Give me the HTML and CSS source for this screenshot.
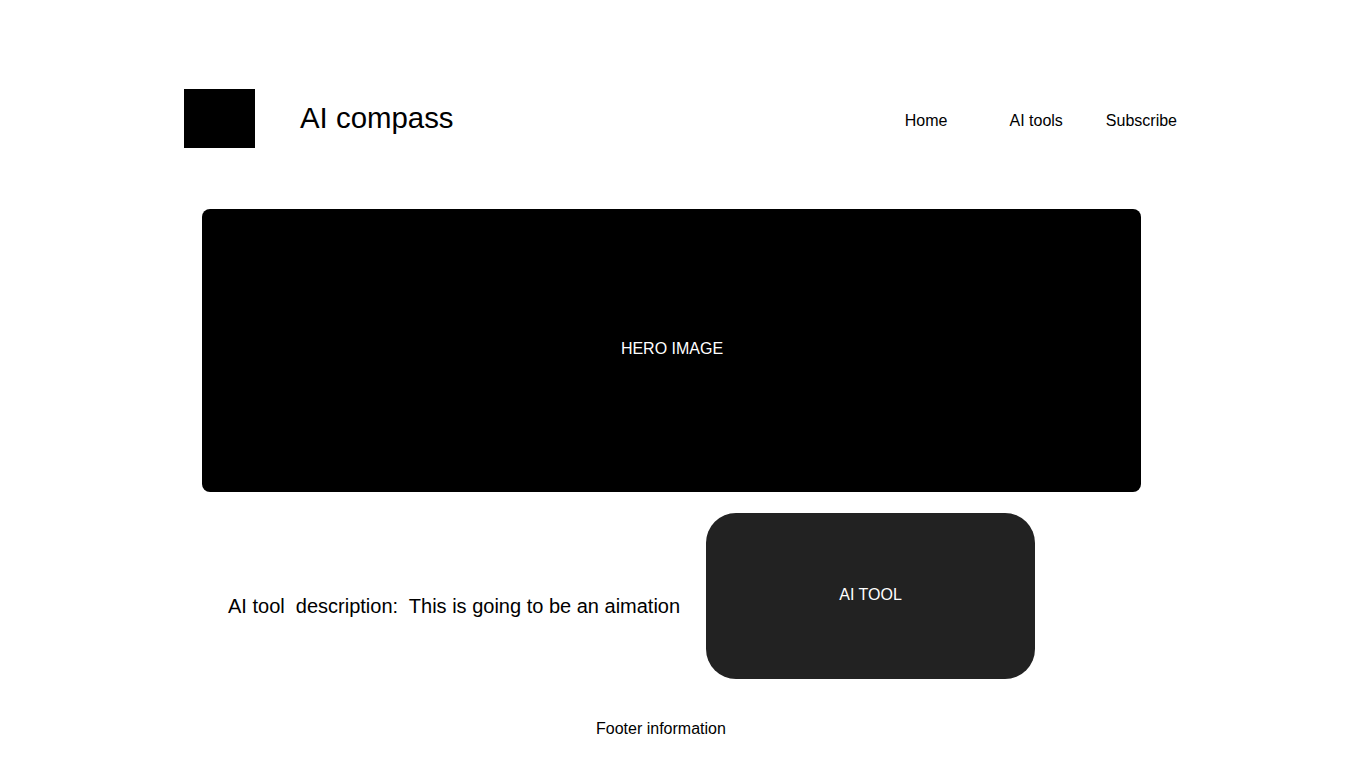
FILE: index.html
```html
<!DOCTYPE html>
<html lang="en">
<head>
<meta charset="utf-8">
<title>AI compass</title>
<link rel="stylesheet" href="styles.css">
</head>
<body>
<header class="site-header">
  <div class="logo"></div>
  <h1 class="site-title">AI compass</h1>
  <nav class="nav">
    <a class="nav-link nav-home" href="#">Home</a>
    <a class="nav-link nav-tools" href="#">AI tools</a>
    <a class="nav-link nav-sub" href="#">Subscribe</a>
  </nav>
</header>
<main class="main">
  <section class="hero">HERO IMAGE</section>
  <section class="tool-row">
    <p class="tool-desc">AI tool&nbsp; description:&nbsp; This is going to be an aimation</p>
    <div class="tool-card">AI TOOL</div>
  </section>
</main>
<footer class="footer">Footer information</footer>
</body>
</html>
```
FILE: styles.css
```css
* { box-sizing: border-box; }
html, body {
  margin: 0;
  padding: 0;
  background: #ffffff;
  color: #000000;
  font-family: "Liberation Sans", Arial, sans-serif;
}
.site-header {
  display: flex;
  align-items: center;
  padding: 89px 189px 0 184px;
}
.logo {
  width: 71px;
  height: 59px;
  background: #000;
  flex: none;
}
.site-title {
  margin: 0 0 1px 45px;
  font-size: 29.4px;
  font-weight: normal;
  line-height: 34px;
}
.nav {
  margin-left: auto;
  display: flex;
  align-items: center;
  padding-top: 5px;
}
.nav-link {
  color: #000;
  text-decoration: none;
  font-size: 16px;
  line-height: 18px;
}
.nav-tools { margin-left: 62px; }
.nav-sub { margin-left: 43px; }
.main {
  padding-left: 202px;
}
.hero {
  margin-top: 61px;
  width: 939px;
  height: 283px;
  background: #000;
  border-radius: 8px;
  color: #fff;
  font-size: 16px;
  display: flex;
  align-items: center;
  justify-content: center;
  padding-left: 1px;
  padding-bottom: 4px;
}
.tool-row {
  display: flex;
  align-items: center;
  margin-top: 21px;
  padding-left: 26px;
}
.tool-desc {
  margin: 20px 0 0 0;
  font-size: 20px;
  line-height: 23px;
  white-space: nowrap;
}
.tool-card {
  margin-left: 26px;
  width: 329px;
  height: 166px;
  border-radius: 30px;
  background: #222222;
  color: #fff;
  font-size: 16px;
  display: flex;
  align-items: center;
  justify-content: center;
  padding-bottom: 2px;
}
.footer {
  margin-top: 41px;
  padding-left: 596px;
  font-size: 16px;
  line-height: 18px;
}
```
